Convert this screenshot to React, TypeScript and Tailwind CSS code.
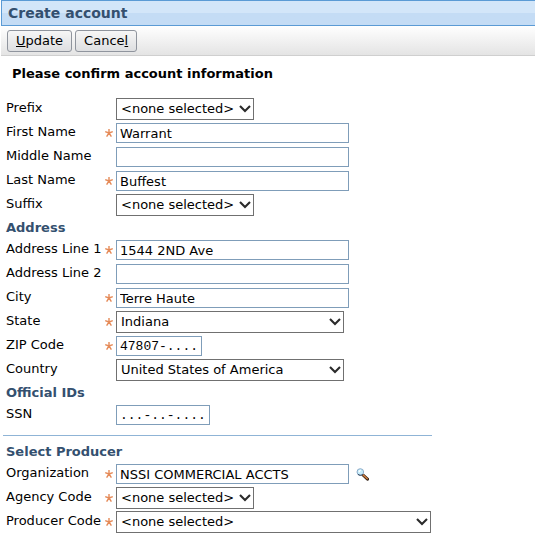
import type { ReactNode } from 'react';

function RequiredMark() {
  return (
    <svg className="h-2 w-2" viewBox="0 0 8 8" fill="none" stroke="#e58a58" strokeWidth="1.4" aria-hidden="true">
      <path d="M4 0V4M0.2 2.6L4 4M7.8 2.6L4 4M1.6 7.6L4 4M6.4 7.6L4 4" />
    </svg>
  );
}

function Row({ id, label, required, children }: { id: string; label: string; required?: boolean; children: ReactNode }) {
  return (
    <div className="flex h-6 items-center">
      <label htmlFor={id} className="w-[98px] shrink-0 self-start leading-[22px] whitespace-nowrap">
        {label}
      </label>
      <span className="flex w-3 shrink-0 items-center pl-px">{required && <RequiredMark />}</span>
      {children}
    </div>
  );
}

function TextRow({ id, label, value, required, className = 'w-[233px]', children }: {
  id: string;
  label: string;
  value: string;
  required?: boolean;
  className?: string;
  children?: ReactNode;
}) {
  return (
    <Row id={id} label={label} required={required}>
      <input
        id={id}
        type="text"
        defaultValue={value}
        className={`h-5 border border-[#7f9db9] bg-white px-[3px] leading-4 outline-none ${className}`}
      />
      {children}
    </Row>
  );
}

function SelectRow({ id, label, value, required, className = 'w-[138px]' }: {
  id: string;
  label: string;
  value: string;
  required?: boolean;
  className?: string;
}) {
  return (
    <Row id={id} label={label} required={required}>
      <div className={`relative ${className}`}>
        <select
          id={id}
          defaultValue={value}
          className="block h-[22px] w-full appearance-none border border-[#707070] bg-white pl-1 leading-5 outline-none"
        >
          <option>{value}</option>
        </select>
        <svg
          className="pointer-events-none absolute top-[7px] right-[3px] h-2 w-3"
          viewBox="0 0 12 8"
          fill="none"
          stroke="#2b2b2b"
          strokeWidth="2.1"
          aria-hidden="true"
        >
          <path d="M1 1L6 6L11 1" />
        </svg>
      </div>
    </Row>
  );
}

function Heading({ children }: { children: ReactNode }) {
  return <h2 className="h-[21px] leading-[22px] font-bold text-[#34506f]">{children}</h2>;
}

function SearchIcon() {
  return (
    <svg className="h-[13px] w-[13px]" viewBox="0 0 13 13" fill="none" aria-hidden="true">
      <path d="M7 7L11.5 11.2" stroke="#2a1a10" strokeWidth="3" strokeLinecap="round" />
      <path d="M7 6.8L11.2 10.6" stroke="#c87a3c" strokeWidth="1.6" strokeLinecap="round" />
      <circle cx="4.3" cy="4" r="3.3" fill="#c5ecfb" stroke="#8cabc8" />
      <path d="M2 6.3C3.2 7.6 5.4 7.7 6.8 6.3" stroke="#34455c" />
      <path d="M3 4.2C3 3 3.7 2.4 4.8 2.3" stroke="#ffffff" strokeWidth="1.2" />
    </svg>
  );
}

const toolButton =
  'h-[22px] rounded-[3px] border border-[#8f949d] bg-linear-to-b from-[#f6f6f6] to-[#dedfe1] px-2 leading-[18px]';

export default function App() {
  return (
    <main className="min-h-screen bg-white pl-px font-['Verdana','DejaVu_Sans',sans-serif] text-[13px] text-black">
      <header className="h-[26px] border border-r-0 border-[#5b9bd5] bg-linear-to-b from-[#d3e6f9] from-50% to-[#c4dcf5] to-50% pl-1.5">
        <h1 className="text-sm leading-6 font-bold text-[#34506f]">Create account</h1>
      </header>
      <div className="flex h-[30px] items-center gap-[3px] border-b border-[#cfcfcf] bg-linear-to-b from-white to-[#e4e4e4] pl-1.5">
        <button type="button" className={toolButton}>
          <u>U</u>pdate
        </button>
        <button type="button" className={toolButton}>
          Cance<u>l</u>
        </button>
      </div>
      <form>
        <p className="pt-2 pb-[13px] pl-[11px] leading-5 font-bold">Please confirm account information</p>
        <section className="pl-[5px]">
          <SelectRow id="prefix" label="Prefix" value="<none selected>" />
          <TextRow id="first" label="First Name" value="Warrant" required />
          <TextRow id="middle" label="Middle Name" value="" />
          <TextRow id="last" label="Last Name" value="Buffest" required />
          <SelectRow id="suffix" label="Suffix" value="<none selected>" />
          <Heading>Address</Heading>
          <TextRow id="line1" label="Address Line 1" value="1544 2ND Ave" required />
          <TextRow id="line2" label="Address Line 2" value="" />
          <TextRow id="city" label="City" value="Terre Haute" required />
          <SelectRow id="state" label="State" value="Indiana" required className="w-[228px]" />
          <TextRow id="zip" label="ZIP Code" value="47807-...." required className="w-[86px] font-['Liberation_Mono',monospace]" />
          <SelectRow id="country" label="Country" value="United States of America" className="w-[228px]" />
          <Heading>Official IDs</Heading>
          <TextRow id="ssn" label="SSN" value="...-..-...." className="w-[94px] font-['Liberation_Mono',monospace]" />
        </section>
        <hr className="mt-2 mb-[5px] ml-0.5 w-[429px] max-w-full border-[#8fb4d6]" />
        <section className="pl-[5px]">
          <Heading>Select Producer</Heading>
          <TextRow id="org" label="Organization" value="NSSI COMMERCIAL ACCTS" required>
            <button type="button" aria-label="Search organizations" className="ml-[7px]">
              <SearchIcon />
            </button>
          </TextRow>
          <SelectRow id="agency" label="Agency Code" value="<none selected>" required />
          <SelectRow id="producer" label="Producer Code" value="<none selected>" required className="w-[315px]" />
        </section>
      </form>
    </main>
  );
}
